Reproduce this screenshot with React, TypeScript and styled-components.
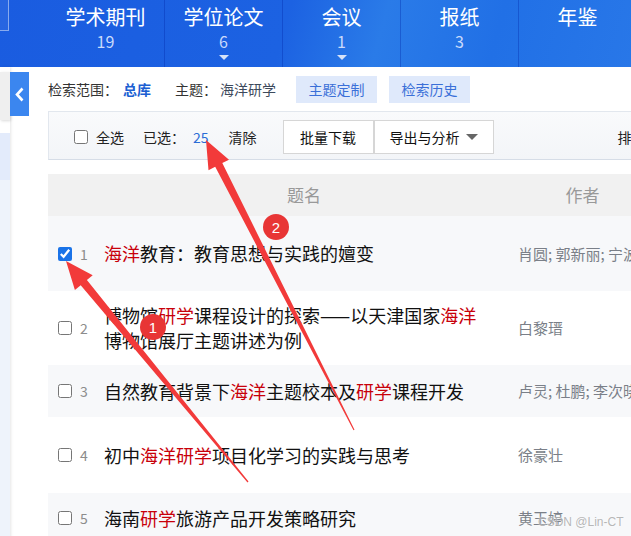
import React from "react";
import styled, { createGlobalStyle } from "styled-components";

const GlobalStyle = createGlobalStyle`
  html, body { margin: 0; padding: 0; background: #fff; }
  * { box-sizing: border-box; }
`;

const FONT = `"Noto Sans CJK SC", "Liberation Sans", sans-serif`;

const Page = styled.div`
  position: relative;
  width: 631px;
  height: 536px;
  overflow: hidden;
  background: #fff;
  font-family: ${FONT};
`;

/* ---------- Header ---------- */
const Header = styled.header`
  display: flex;
  height: 67px;
  background: linear-gradient(105deg, #1a5ce0 0%, #1c62e2 45%, #2a7be8 60%, #2170e6 78%, #2877e8 100%);
`;

const HeaderStub = styled.div`
  width: 47px;
  flex: none;
`;

const SearchStub = styled.div`
  width: 9px;
  height: 31px;
  border: 1px solid rgba(255, 255, 255, 0.45);
  border-left: none;
  border-top: none;
  background: rgba(255, 255, 255, 0.06);
`;

const Tab = styled.div`
  width: 118px;
  flex: none;
  display: flex;
  flex-direction: column;
  align-items: center;
  padding-top: 4px;
  border-right: 1px solid rgba(0, 40, 170, 0.35);
`;

const TabTitle = styled.div`
  font-size: 20px;
  line-height: 26px;
  color: #fff;
`;

const TabCount = styled.div`
  margin-top: 2px;
  font-size: 16px;
  line-height: 18px;
  color: #c9dafb;
`;

const TabCaret = styled.div`
  margin-top: 5px;
  width: 0;
  height: 0;
  border-left: 5px solid transparent;
  border-right: 5px solid transparent;
  border-top: 5px solid #d6e2f8;
`;

/* ---------- Body ---------- */
const Body = styled.div`
  display: flex;
  min-height: 469px;
`;

const Sidebar = styled.aside`
  width: 10px;
  flex: none;
  display: flex;
  flex-direction: column;
  box-shadow: 1px 0 3px rgba(0, 0, 0, 0.1);
`;

const SideBlock = styled.div<{ $bg: string; $h?: number; $mt?: number }>`
  margin-top: ${(p) => p.$mt ?? 0}px;
  height: ${(p) => (p.$h ? `${p.$h}px` : "auto")};
  flex: ${(p) => (p.$h ? "none" : "1")};
  background: ${(p) => p.$bg};
  box-shadow: ${(p) => (p.$mt === 5 ? "1px 1px 3px rgba(0,0,0,0.15)" : "none")};
`;

const CollapseCol = styled.div`
  width: 38px;
  flex: none;
`;

const CollapseBtn = styled.div`
  margin-top: 5px;
  width: 19px;
  height: 44px;
  background: #3b86ef;
  display: flex;
  align-items: center;
  justify-content: center;
`;

const Main = styled.main`
  width: 600px;
  flex: none;
  display: flex;
  flex-direction: column;
  & > * {
    flex-shrink: 0;
  }
`;

const FilterRow = styled.div`
  height: 44px;
  display: flex;
  align-items: center;
  font-size: 14px;
  line-height: 20px;
`;

const FilterLabel = styled.span<{ $ml?: number }>`
  color: #333;
  margin-left: ${(p) => p.$ml ?? 0}px;
`;

const FilterValue = styled.span<{ $strong?: boolean }>`
  margin-left: ${(p) => (p.$strong ? 5 : 3)}px;
  color: ${(p) => (p.$strong ? "#1c5fd2" : "#3d4a5c")};
  font-weight: ${(p) => (p.$strong ? 700 : 400)};
`;

const PillButton = styled.span<{ $ml: number }>`
  margin-left: ${(p) => p.$ml}px;
  width: 81px;
  height: 27px;
  display: flex;
  align-items: center;
  justify-content: center;
  background: #dfe9fb;
  color: #3a6fd8;
`;

const Toolbar = styled.div`
  height: 49px;
  display: flex;
  align-items: center;
  padding: 3px 0 0 25px;
  border: 1px solid #e2e7ee;
  border-bottom-color: #d6dde7;
  background: linear-gradient(#f9fafc, #f3f5f8);
  font-size: 14px;
  line-height: 20px;
  color: #222;
  white-space: nowrap;
`;

const Check = styled.input`
  width: 14px;
  height: 14px;
  margin: 0;
  flex: none;
  accent-color: #1a73e8;
`;

const ToolText = styled.span<{ $ml: number; $blue?: boolean }>`
  margin-left: ${(p) => p.$ml}px;
  color: ${(p) => (p.$blue ? "#2b6dd6" : "#222")};
`;

const ToolButton = styled.span<{ $w: number; $ml: number }>`
  margin-left: ${(p) => p.$ml}px;
  width: ${(p) => p.$w}px;
  height: 34px;
  flex: none;
  display: flex;
  align-items: center;
  justify-content: center;
  background: #fff;
  border: 1px solid #d6d6d6;
  color: #111;
`;

const Caret = styled.span`
  margin-left: 6px;
  width: 0;
  height: 0;
  border-left: 6px solid transparent;
  border-right: 6px solid transparent;
  border-top: 6px solid #666;
`;

const Table = styled.div`
  margin-top: 14px;
  width: 600px;
`;

const GRID = `56px 413px 131px`;

const THead = styled.div`
  display: grid;
  grid-template-columns: ${GRID};
  height: 42px;
  align-items: center;
  background: #f1f1f1;
  font-size: 17px;
  line-height: 24px;
  color: #999;
`;

const HeadCell = styled.div<{ $pr?: number }>`
  text-align: center;
  padding-right: ${(p) => p.$pr ?? 0}px;
`;

const Row = styled.div<{ $h: number; $alt: boolean }>`
  display: grid;
  grid-template-columns: ${GRID};
  align-items: center;
  min-height: ${(p) => p.$h}px;
  background: ${(p) => (p.$alt ? "#f7f8fa" : "#fff")};
`;

const SelCell = styled.div`
  display: flex;
  align-items: center;
  padding-left: 10px;
`;

const RowNum = styled.span`
  margin-left: 8px;
  font-size: 14px;
  line-height: 20px;
  color: #8c8c8c;
`;

const Title = styled.div`
  padding-right: 23px;
  font-size: 18px;
  line-height: 25px;
  color: #111;
`;

const Hl = styled.span`
  color: #c8000a;
`;

const Author = styled.div`
  padding-left: 1px;
  font-size: 15px;
  line-height: 20px;
  color: #7a7f88;
  white-space: nowrap;
`;

const Overlay = styled.svg`
  position: absolute;
  left: 0;
  top: 0;
  pointer-events: none;
`;

const Watermark = styled.div`
  position: absolute;
  left: 538px;
  top: 513px;
  white-space: nowrap;
  font-family: "Liberation Sans", sans-serif;
  font-size: 12px;
  line-height: 18px;
  color: rgba(165, 165, 165, 0.8);
  text-shadow: 0 0 2px rgba(255, 255, 255, 0.9);
`;

type Seg = { t: string; hl?: boolean };
type Item = { segs: Seg[]; author: string; h: number; checked?: boolean };

const rows: Item[] = [
  {
    segs: [{ t: "海洋", hl: true }, { t: "教育：教育思想与实践的嬗变" }],
    author: "肖圆; 郭新丽; 宁波大学",
    h: 75,
    checked: true,
  },
  {
    segs: [
      { t: "博物馆" },
      { t: "研学", hl: true },
      { t: "课程设计的探索——以天津国家" },
      { t: "海洋", hl: true },
      { t: "博物馆展厅主题讲述为例" },
    ],
    author: "白黎瑨",
    h: 74,
  },
  {
    segs: [
      { t: "自然教育背景下" },
      { t: "海洋", hl: true },
      { t: "主题校本及" },
      { t: "研学", hl: true },
      { t: "课程开发" },
    ],
    author: "卢灵; 杜鹏; 李次晓",
    h: 52,
  },
  {
    segs: [{ t: "初中" }, { t: "海洋研学", hl: true }, { t: "项目化学习的实践与思考" }],
    author: "徐豪壮",
    h: 76,
  },
  {
    segs: [{ t: "海南" }, { t: "研学", hl: true }, { t: "旅游产品开发策略研究" }],
    author: "黄玉婷",
    h: 50,
  },
];

const tabs = [
  { title: "学术期刊", count: "19" },
  { title: "学位论文", count: "6", caret: true },
  { title: "会议", count: "1", caret: true },
  { title: "报纸", count: "3" },
  { title: "年鉴", count: "" },
];

function arrowPoints(tx: number, ty: number, px: number, py: number) {
  const L = Math.hypot(px - tx, py - ty);
  const dx = (px - tx) / L;
  const dy = (py - ty) / L;
  const nx = -dy;
  const ny = dx;
  const head = 28;
  const H = 11.5;
  const w1 = 4;
  const w0 = 0.6;
  const bx = px - dx * head;
  const by = py - dy * head;
  const pts = [
    [tx + nx * w0, ty + ny * w0],
    [bx + nx * w1, by + ny * w1],
    [bx + nx * H, by + ny * H],
    [px, py],
    [bx - nx * H, by - ny * H],
    [bx - nx * w1, by - ny * w1],
    [tx - nx * w0, ty - ny * w0],
  ];
  return pts.map((p) => `${p[0].toFixed(1)},${p[1].toFixed(1)}`).join(" ");
}

export default function App() {
  return (
    <Page>
      <GlobalStyle />
      <Header>
        <HeaderStub>
          <SearchStub />
        </HeaderStub>
        {tabs.map((t) => (
          <Tab key={t.title}>
            <TabTitle>{t.title}</TabTitle>
            <TabCount>{t.count || "\u00a0"}</TabCount>
            {t.caret && <TabCaret />}
          </Tab>
        ))}
      </Header>
      <Body>
        <Sidebar>
          <SideBlock $bg="#efefef" $h={48} $mt={5} />
          <SideBlock $bg="#e3ebfb" $h={47} $mt={13} />
          <SideBlock $bg="#eef3fb" />
        </Sidebar>
        <CollapseCol>
          <CollapseBtn>
            <svg width="9" height="15" viewBox="0 0 9 15">
              <polyline points="7.5,1.5 2,7.5 7.5,13.5" fill="none" stroke="#fff" strokeWidth="2.6" />
            </svg>
          </CollapseBtn>
        </CollapseCol>
        <Main>
          <FilterRow>
            <FilterLabel>检索范围：</FilterLabel>
            <FilterValue $strong>总库</FilterValue>
            <FilterLabel $ml={24}>主题：</FilterLabel>
            <FilterValue>海洋研学</FilterValue>
            <PillButton $ml={20}>主题定制</PillButton>
            <PillButton $ml={12}>检索历史</PillButton>
          </FilterRow>
          <Toolbar>
            <Check type="checkbox" readOnly />
            <ToolText $ml={8}>全选</ToolText>
            <ToolText $ml={19}>已选：</ToolText>
            <ToolText $ml={8} $blue>25</ToolText>
            <ToolText $ml={20}>清除</ToolText>
            <ToolButton $w={91} $ml={26}>批量下载</ToolButton>
            <ToolButton $w={120} $ml={0}>
              导出与分析<Caret />
            </ToolButton>
            <ToolText $ml={124}>排序</ToolText>
          </Toolbar>
          <Table>
            <THead>
              <div />
              <HeadCell $pr={13}>题名</HeadCell>
              <HeadCell>作者</HeadCell>
            </THead>
            {rows.map((r, i) => (
              <Row key={i} $h={r.h} $alt={i % 2 === 0}>
                <SelCell>
                  <Check type="checkbox" readOnly checked={!!r.checked} />
                  <RowNum>{i + 1}</RowNum>
                </SelCell>
                <Title>
                  {r.segs.map((s, j) => (s.hl ? <Hl key={j}>{s.t}</Hl> : <React.Fragment key={j}>{s.t}</React.Fragment>))}
                </Title>
                <Author>{r.author}</Author>
              </Row>
            ))}
          </Table>
        </Main>
      </Body>
      <Overlay width="631" height="536" viewBox="0 0 631 536">
        <polygon points={arrowPoints(248, 482, 66, 261)} fill="#f23a3a" />
        <polygon points={arrowPoints(354, 430, 206, 140)} fill="#f23a3a" />
        <circle cx="153" cy="327" r="13" fill="#e83535" />
        <text x="153" y="332.5" textAnchor="middle" fontSize="15" fill="#fff" fontFamily="Liberation Sans, sans-serif">1</text>
        <circle cx="276" cy="227" r="13" fill="#e83535" />
        <text x="276" y="232.5" textAnchor="middle" fontSize="15" fill="#fff" fontFamily="Liberation Sans, sans-serif">2</text>
      </Overlay>
      <Watermark>CSDN @Lin-CT</Watermark>
    </Page>
  );
}
